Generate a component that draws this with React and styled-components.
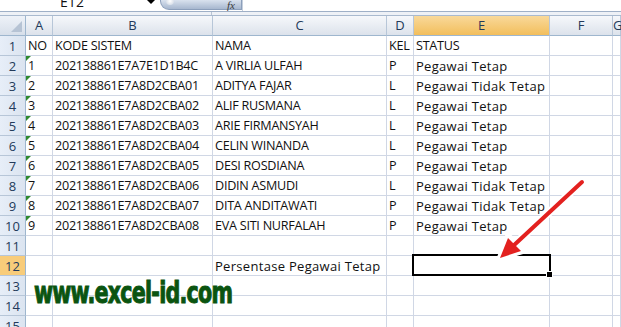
import React from 'react'
import styled, { createGlobalStyle, css } from 'styled-components';

const GlobalStyle = createGlobalStyle`
    body {
        margin: 0;
        background: #ffffff;
        overflow: hidden;
    }
`;

const Screen = styled.div`
    position: relative;
    width: 621px;
    height: 327px;
    overflow: hidden;
    background: #ffffff;
    font-family: "Open Sans", "Liberation Sans", sans-serif;
`;

const FormulaBar = styled.div`
    display: flex;
    height: 11px;
    border-bottom: 1px solid #9fb0c7;
    overflow: hidden;
`;

const NameBox = styled.div`
    width: 144px;
    text-align: center;
    font-size: 14px;
    line-height: 14px;
    margin-top: -5px;
    color: #111;
`;

const DropArrow = styled.div`
    width: 0;
    height: 0;
    margin: 0 5px 0 3px;
    border-left: 4px solid transparent;
    border-right: 4px solid transparent;
    border-top: 4px solid #000;
`;

const FxButton = styled.div`
    position: relative;
    width: 82px;
    height: 10px;
    border: 1px solid #8c9fbb;
    border-top: none;
    border-radius: 0 0 0 9px;
    background: linear-gradient(#d9e2ee, #a7b7cf);
    display: flex;
    justify-content: flex-end;
    align-items: center;
    padding-right: 6px;
    box-sizing: border-box;
    font-family: "Liberation Serif", serif;
    font-style: italic;
    font-size: 11px;
    color: #3a3a3a;

    &::before {
        content: "";
        position: absolute;
        left: 5px;
        top: -3px;
        width: 8px;
        height: 8px;
        border-radius: 50%;
        background: radial-gradient(#ffffff, #c8d2e0);
    }
`;

const FormulaInput = styled.div`
    flex: 1;
    border-left: 1px solid #c5cfdd;
`;

const Strip = styled.div`
    height: 3px;
    background: #eef1f6;
    border-bottom: 1px solid #a9bacf;
    display: grid;
    grid-template-columns: 212px 1fr;

    & > div:first-child {
        border-right: 1px solid #b8c4d4;
    }
`;

const Sheet = styled.div`
    display: grid;
    grid-template-columns: 26px 27px 160px 174px 27px 136px 63px 8px;
    grid-template-rows: 20px;
    grid-auto-rows: 20px;
`;

const Corner = styled.div`
    position: relative;
    box-sizing: border-box;
    background: linear-gradient(#eef2f8, #d7dfea);
    border-right: 1px solid #9eb6ce;
    border-bottom: 1px solid #9eb6ce;

    &::after {
        content: "";
        position: absolute;
        right: 3px;
        bottom: 3px;
        width: 0;
        height: 0;
        border-left: 11px solid transparent;
        border-bottom: 11px solid #b6c3d4;
    }
`;

const ColHeader = styled.div`
    box-sizing: border-box;
    background: ${p => p.$active
        ? 'linear-gradient(#f9d99a, #f2be5c)'
        : 'linear-gradient(#f6f8fb, #dce2eb)'};
    border-right: 1px solid #b7c6d8;
    border-bottom: 1px solid #9eb6ce;
    text-align: center;
    font-size: 13px;
    line-height: 19px;
    color: #233a5a;
`;

const RowHeader = styled.div`
    box-sizing: border-box;
    background: ${p => p.$active ? '#f8cc7a' : 'linear-gradient(90deg, #e7eef8, #dbe4f0)'};
    border-right: 1px solid #9eb6ce;
    border-bottom: 1px solid #b7c6d8;
    text-align: center;
    font-size: 13px;
    line-height: 20px;
    color: #233a5a;
`;

// Calibri is narrow in caps and wide in lower case, so the two get their own spacing
const Cell = styled.div`
    position: relative;
    box-sizing: border-box;
    border-right: 1px solid #d0d7e5;
    border-bottom: 1px solid #d0d7e5;
    padding-left: 2px;
    font-size: ${p => p.$lower ? '13px' : '12.6px'};
    letter-spacing: ${p => p.$lower ? '0.3px' : '-0.25px'};
    line-height: 20px;
    color: #111;
    white-space: nowrap;

    ${p => p.$flag && css`
        &::before {
            content: "";
            position: absolute;
            left: 0;
            top: 0;
            border-top: 5px solid #2f8a2f;
            border-right: 5px solid transparent;
        }
    `}

    ${p => p.$selected && css`
        &::after {
            content: "";
            position: absolute;
            left: -2px;
            top: -2px;
            right: -2px;
            bottom: -1px;
            border: 2px solid #000;
            z-index: 2;
        }
    `}
`;

const FillHandle = styled.span`
    position: absolute;
    right: -4px;
    bottom: -3px;
    width: 5px;
    height: 5px;
    background: #000;
    border: 1px solid #fff;
    z-index: 3;
`;

const Watermark = styled.div`
    position: absolute;
    left: 34px;
    top: 275px;
    font-family: "DejaVu Sans Condensed", "DejaVu Sans", sans-serif;
    font-weight: bold;
    font-size: 30px;
    letter-spacing: -1px;
    color: #0a5410;
    -webkit-text-stroke: 1px #0a5410;
    text-shadow: 0 0 2px #ffffff, 0 0 2px #ffffff;
    transform-origin: left top;
    transform: scaleX(0.765);
    white-space: nowrap;
`;

const ArrowLayer = styled.svg`
    position: absolute;
    left: 0;
    top: 0;
    z-index: 5;
    pointer-events: none;
`;

const columns = ['A', 'B', 'C', 'D', 'E', 'F', 'G'];

const rows = [
    ['NO', 'KODE SISTEM', 'NAMA', 'KEL', 'STATUS'],
    ['1', '202138861E7A7E1D1B4C', 'A VIRLIA ULFAH', 'P', 'Pegawai Tetap'],
    ['2', '202138861E7A8D2CBA01', 'ADITYA FAJAR', 'L', 'Pegawai Tidak Tetap'],
    ['3', '202138861E7A8D2CBA02', 'ALIF RUSMANA', 'L', 'Pegawai Tetap'],
    ['4', '202138861E7A8D2CBA03', 'ARIE FIRMANSYAH', 'L', 'Pegawai Tetap'],
    ['5', '202138861E7A8D2CBA04', 'CELIN WINANDA', 'L', 'Pegawai Tetap'],
    ['6', '202138861E7A8D2CBA05', 'DESI ROSDIANA', 'P', 'Pegawai Tetap'],
    ['7', '202138861E7A8D2CBA06', 'DIDIN ASMUDI', 'L', 'Pegawai Tidak Tetap'],
    ['8', '202138861E7A8D2CBA07', 'DITA ANDITAWATI', 'P', 'Pegawai Tidak Tetap'],
    ['9', '202138861E7A8D2CBA08', 'EVA SITI NURFALAH', 'P', 'Pegawai Tetap'],
    [],
    ['', '', 'Persentase Pegawai Tetap', '', ''],
    [],
    [],
    [],
];

export default function App() {
    return (
        <Screen>
            <GlobalStyle />
            <FormulaBar>
                <NameBox>E12</NameBox>
                <DropArrow />
                <FxButton>fx</FxButton>
                <FormulaInput />
            </FormulaBar>
            <Strip><div /><div /></Strip>
            <Sheet>
                <Corner />
                {columns.map(col => (
                    <ColHeader key={col} $active={col === 'E'}>{col}</ColHeader>
                ))}
                {rows.map((row, r) => (
                    <React.Fragment key={r}>
                        <RowHeader $active={r + 1 === 12}>{r + 1}</RowHeader>
                        {columns.map((col, c) => {
                            const selected = r + 1 === 12 && col === 'E';
                            const text = row[c] || '';
                            return (
                                <Cell
                                    key={col}
                                    $lower={/[a-z]/.test(text)}
                                    $flag={c === 0 && r >= 1 && r <= 9}
                                    $selected={selected}>
                                    {text}
                                    {selected && <FillHandle />}
                                </Cell>
                            );
                        })}
                    </React.Fragment>
                ))}
            </Sheet>
            <Watermark>www.excel-id.com</Watermark>
            <ArrowLayer width="621" height="327">
                <line x1="582" y1="182" x2="512" y2="247" stroke="#ffffff" strokeWidth="8" />
                <polygon points="499,259 508,235 524,251" fill="#ffffff" stroke="#ffffff" strokeWidth="5" strokeLinejoin="round" />
                <line x1="582" y1="182" x2="512" y2="247" stroke="#e3211f" strokeWidth="4" strokeLinecap="round" />
                <polygon points="500,258 508,238 521,251" fill="#e3211f" />
            </ArrowLayer>
        </Screen>
    );
}
